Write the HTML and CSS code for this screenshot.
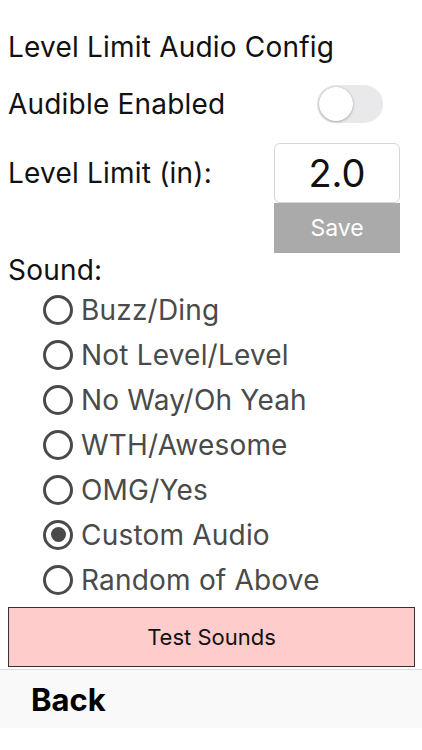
FILE: index.html
```html
<!DOCTYPE html>
<html>
<head>
<meta charset="utf-8">
<link rel="stylesheet" href="styles.css">
</head>
<body>
<div class="page">
  <div class="title">Level Limit Audio Config</div>
  <div class="row toggle-row">
    <span class="label">Audible Enabled</span>
    <span class="toggle"><span class="knob"></span></span>
  </div>
  <div class="row limit-row">
    <span class="label">Level Limit (in):</span>
    <div class="limit-col">
      <div class="input">2.0</div>
      <div class="save">Save</div>
    </div>
  </div>
  <div class="sound-label">Sound:</div>
  <ul class="radios">
    <li><span class="radio"></span>Buzz/Ding</li>
    <li><span class="radio"></span>Not Level/Level</li>
    <li><span class="radio"></span>No Way/Oh Yeah</li>
    <li><span class="radio"></span>WTH/Awesome</li>
    <li><span class="radio"></span>OMG/Yes</li>
    <li><span class="radio checked"></span>Custom Audio</li>
    <li><span class="radio"></span>Random of Above</li>
  </ul>
  <div class="test">Test Sounds</div>
</div>
<div class="bottom-bar"><span class="back">Back</span></div>
</body>
</html>
```
FILE: styles.css
```css
html, body {
  margin: 0;
  padding: 0;
  background: #fff;
  font-family: Inter, "Liberation Sans", Arial, sans-serif;
  color: #111;
}
.page {
  padding: 28px 7px 0 8px;
}
.title {
  font-size: 28px;
  letter-spacing: 0.2px;
  line-height: 38px;
}
.row {
  display: flex;
  justify-content: space-between;
}
.label {
  font-size: 28px;
  letter-spacing: 0.2px;
}
.toggle-row {
  margin-top: 18px;
  height: 40px;
  align-items: center;
  padding-right: 32px;
}
.toggle {
  position: relative;
  width: 66px;
  height: 38px;
  border-radius: 19px;
  background: #e9e9eb;
}
.knob {
  position: absolute;
  left: 2px;
  top: 2px;
  width: 34px;
  height: 34px;
  border-radius: 50%;
  background: #fff;
  box-shadow: 0 1px 3px rgba(0,0,0,0.25), 0 0 1px rgba(0,0,0,0.2);
}
.limit-row {
  margin-top: 19px;
  align-items: flex-start;
  padding-right: 15px;
}
.limit-row .label {
  margin-top: 13px;
}
.limit-col {
  width: 126px;
}
.input {
  box-sizing: border-box;
  height: 60px;
  border: 1px solid #d6d6d6;
  border-radius: 6px;
  font-size: 38px;
  line-height: 58px;
  text-align: center;
  color: #111;
}
.save {
  height: 50px;
  background: #aaaaaa;
  color: #fff;
  font-size: 23px;
  line-height: 50px;
  text-align: center;
}
.sound-label {
  font-size: 28px;
  letter-spacing: 0.2px;
  line-height: 34px;
}
.radios {
  list-style: none;
  margin: 0;
  padding: 0 0 0 35px;
  color: #4a4a4a;
}
.radios li {
  display: flex;
  align-items: center;
  height: 45px;
  font-size: 28px;
  letter-spacing: 0.2px;
}
.radio {
  box-sizing: border-box;
  width: 30px;
  height: 30px;
  border: 3px solid #4a4a4a;
  border-radius: 50%;
  margin-right: 8px;
  display: flex;
  align-items: center;
  justify-content: center;
}
.radio.checked::after {
  content: "";
  width: 15px;
  height: 15px;
  border-radius: 50%;
  background: #4a4a4a;
}
.test {
  margin-top: 5px;
  box-sizing: border-box;
  height: 60px;
  background: #ffcccc;
  border: 1px solid #333;
  font-size: 22px;
  line-height: 58px;
  text-align: center;
  color: #111;
}
.bottom-bar {
  margin-top: 2px;
  border-top: 1px solid #dcdcdc;
  background: #f9f9f9;
  height: 58px;
  display: flex;
  align-items: center;
  padding-left: 31px;
}
.back {
  font-size: 31px;
  font-weight: bold;
  color: #000;
}
```
